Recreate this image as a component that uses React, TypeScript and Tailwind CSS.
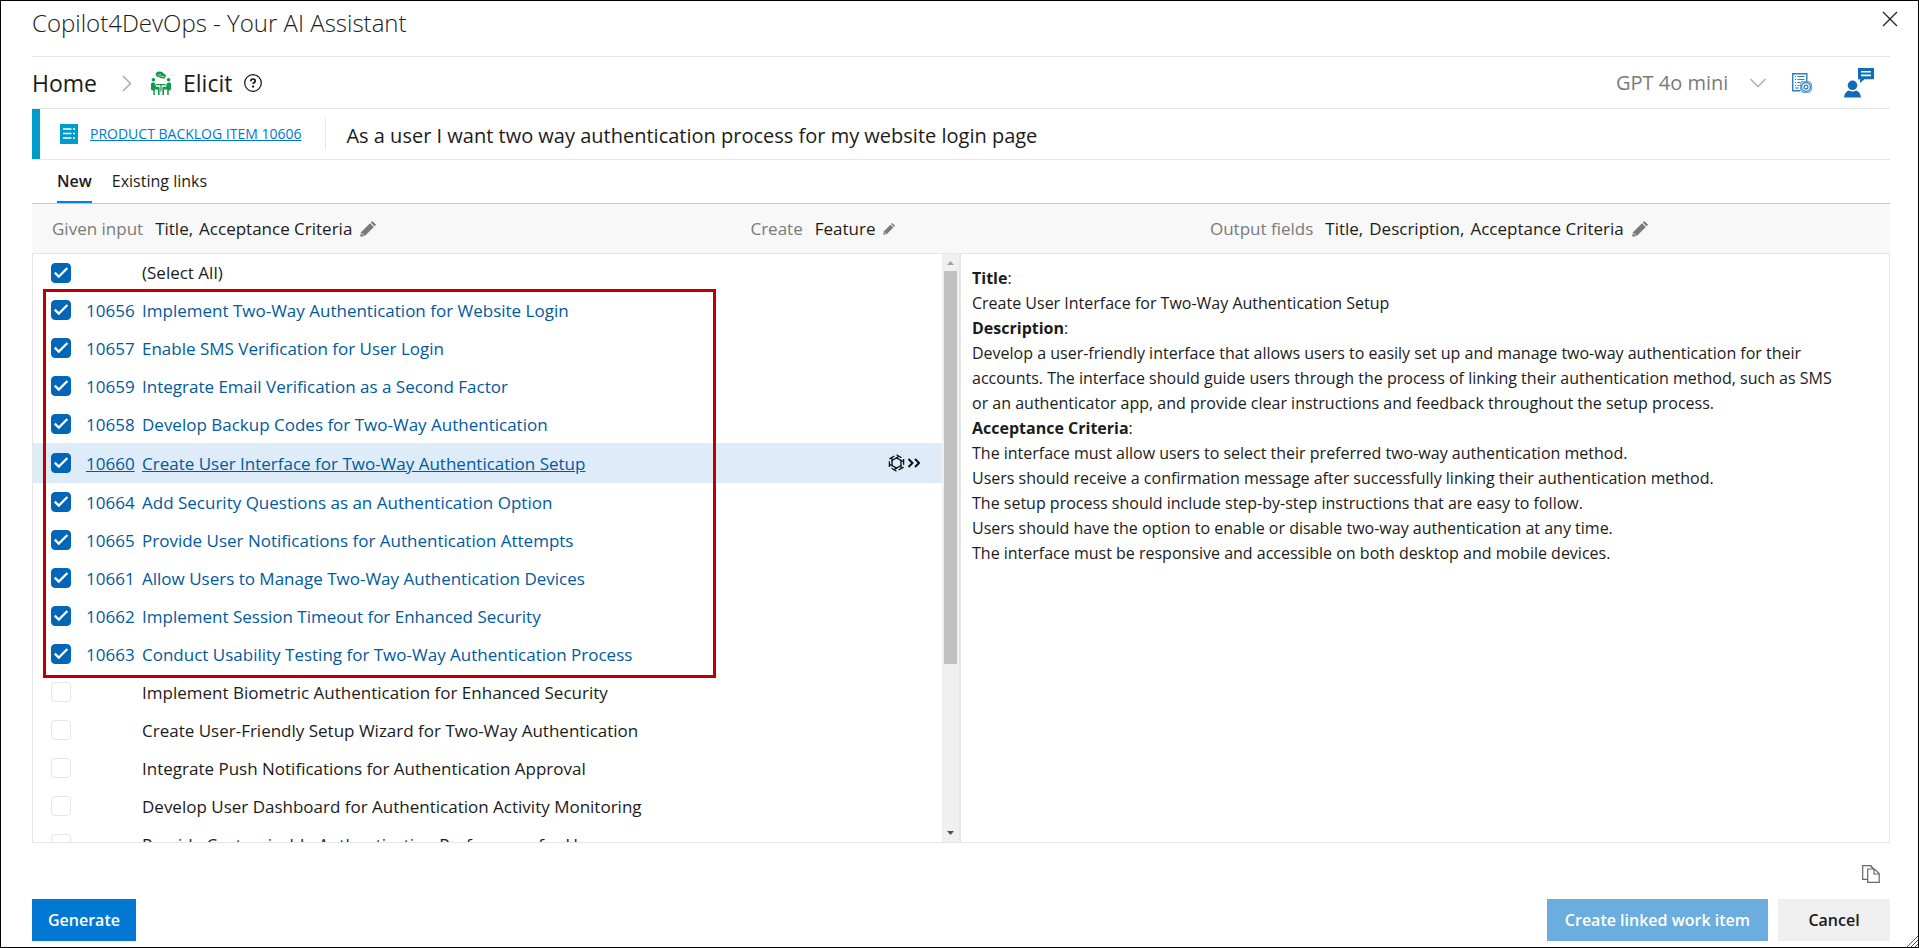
import React, { useState } from 'react';

type WorkItem = {
  id?: string;
  title: string;
};

const ITEMS: WorkItem[] = [
  { id: '10656', title: 'Implement Two-Way Authentication for Website Login' },
  { id: '10657', title: 'Enable SMS Verification for User Login' },
  { id: '10659', title: 'Integrate Email Verification as a Second Factor' },
  { id: '10658', title: 'Develop Backup Codes for Two-Way Authentication' },
  { id: '10660', title: 'Create User Interface for Two-Way Authentication Setup' },
  { id: '10664', title: 'Add Security Questions as an Authentication Option' },
  { id: '10665', title: 'Provide User Notifications for Authentication Attempts' },
  { id: '10661', title: 'Allow Users to Manage Two-Way Authentication Devices' },
  { id: '10662', title: 'Implement Session Timeout for Enhanced Security' },
  { id: '10663', title: 'Conduct Usability Testing for Two-Way Authentication Process' },
  { title: 'Implement Biometric Authentication for Enhanced Security' },
  { title: 'Create User-Friendly Setup Wizard for Two-Way Authentication' },
  { title: 'Integrate Push Notifications for Authentication Approval' },
  { title: 'Develop User Dashboard for Authentication Activity Monitoring' },
  { title: 'Provide Customizable Authentication Preferences for Users' },
];

const CRITERIA = [
  'The interface must allow users to select their preferred two-way authentication method.',
  'Users should receive a confirmation message after successfully linking their authentication method.',
  'The setup process should include step-by-step instructions that are easy to follow.',
  'Users should have the option to enable or disable two-way authentication at any time.',
  'The interface must be responsive and accessible on both desktop and mobile devices.',
];

const Checkbox: React.FC<{ label: string; checked: boolean; onChange: () => void }> = ({ label, checked, onChange }) => (
  <span className="grid h-5 w-5 shrink-0">
    <input
      type="checkbox"
      aria-label={label}
      checked={checked}
      onChange={onChange}
      className="col-start-1 row-start-1 h-5 w-5 appearance-none rounded border border-[#e6e6e6] bg-white checked:border-[#0067b8] checked:bg-[#0067b8]"
    />
    {checked && (
      <svg className="pointer-events-none col-start-1 row-start-1 h-5 w-5" viewBox="0 0 20 20" fill="none" stroke="#fff" strokeWidth="2.2">
        <path d="M3.8 9.6l4 4L16.4 5" />
      </svg>
    )}
  </span>
);

const PencilIcon: React.FC<{ className?: string }> = ({ className = 'h-4 w-4' }) => (
  <svg className={className} viewBox="0 0 16 16" fill="#7a7a7a">
    <path d="M1 11.2L10 2.2l3.8 3.8-9 9L.2 15.8z" />
    <path d="M10.8 1.4L12.2 0 16 3.8l-1.4 1.4z" />
    <path d="M1 11.6l3.4 3.4" stroke="#f8f8f8" strokeWidth="0.8" />
  </svg>
);

const ElicitIcon = () => (
  <svg className="h-6 w-5" viewBox="0 0 20 24" fill="#109b48">
    <ellipse cx="8.6" cy="3.2" rx="3.8" ry="2.8" />
    <ellipse cx="11.2" cy="4.8" rx="3.6" ry="2.4" />
    <path d="M13 6l1 2-3-1z" />
    <path d="M6.8 3.6q1.6 1.4 3.2-.2M9.6 5.4h3.4" fill="none" stroke="#fff" strokeWidth="0.7" />
    <circle cx="2.4" cy="8.8" r="1.8" />
    <circle cx="17.6" cy="8.8" r="1.8" />
    <path d="M0 13q0-1.600 1.400-1.600h1.200q1.200 0 1.600 1.400l.8 3h2.400q1.200 0 1.200 1.200V24H7v-5.600H3.800V24H2.300v-4.600H1.400Q0 19.400 0 18z" />
    <path d="M20 13q0-1.600-1.400-1.600h-1.200q-1.200 0-1.600 1.400l-.8 3h-2.400q-1.200 0-1.200 1.200V24H13v-5.600h3.200V24h1.500v-4.600h.9q1.400 0 1.400-1.400z" />
    <path d="M5.200 13h9.600v1.300H5.200zM9.400 14h1.200v6.500H9.400z" />
  </svg>
);

const LogIcon = () => (
  <svg className="h-5 w-5" viewBox="0 0 20 20" fill="none" stroke="#2d7fc7">
    <path d="M14.800 8V.7H.7v17H8" strokeWidth="1.4" />
    <path d="M5.500 3.500h7M5.500 6.500h7M5.500 9.500h3M5.500 12.500h2M3 3.500h1M3 6.500h1M3 9.500h1M3 12.500h1M3 15h4" strokeWidth="1.2" />
    <path d="M9.500 8.500h8l2 2v7l-2 2h-7l-2-2v-7z" fill="#b9d7f0" stroke="#6aa7da" strokeWidth="1" />
    <circle cx="14" cy="14" r="4.4" fill="#fff" strokeWidth="1.2" />
    <circle cx="14" cy="14" r="1.9" strokeWidth="1.3" />
  </svg>
);

const FeedbackIcon = () => (
  <svg className="h-[30px] w-[30px]" viewBox="0 0 30 30" fill="#0f6cbd">
    <path d="M14 0h16v11.200H20.500L16 15v-3.800h-2z" />
    <path d="M17 3.800h10M17 7.400h10" stroke="#fff" strokeWidth="1.6" />
    <circle cx="8.5" cy="17.3" r="4.8" />
    <path d="M0 29.500q.5-5.500 4.800-7 3.700 2.200 7.400 0 4.300 1.500 4.800 7z" />
  </svg>
);

const BacklogIcon = () => (
  <svg className="h-5 w-[18px]" viewBox="0 0 18 20">
    <path d="M0 0h18v20H0z" fill="#009ccc" />
    <path d="M3 5h8.500M3 9.500h8.500M3 14h8.500M13 5h2M13 9.500h2M13 14h2" stroke="#fff" strokeWidth="1.5" />
  </svg>
);

// two strokes repeated around the hexagon give the swirl
const SwirlIcon = () => (
  <svg className="h-[18px] w-8" viewBox="0 0 32 18" fill="none" stroke="#111">
    {[0, 60, 120, 180, 240, 300].map((angle) => (
      <path key={angle} d="M8.500.8l5 2.900M8 3.600l7.400 4.200" strokeWidth="1.3" transform={`rotate(${angle} 8.5 9)`} />
    ))}
    <path d="M20.500 5l4 4-4 4M27 5l4 4-4 4" strokeWidth="2" />
  </svg>
);

const CopyIcon = () => (
  <svg className="h-[18px] w-[18px]" viewBox="0 0 18 18" fill="none" stroke="#666" strokeWidth="1.2">
    <path d="M5.500 14.400H.7V.7h7.800l2.800 3" />
    <path d="M5.700 4h6.800l4.700 4.500v8.800H5.700z" fill="#fff" />
    <path d="M12 4v5h5M8.500.7l3 3.300" />
  </svg>
);

const FieldGroup: React.FC<{ label: string; values: string[]; small?: boolean }> = ({ label, values, small }) => (
  <>
    <span className="text-[#7a7a7a]">{label}</span>
    <span className="ml-3 flex gap-1.5">
      {values.map((value, i) => (
        <span key={value}>{i < values.length - 1 ? `${value},` : value}</span>
      ))}
    </span>
    <button type="button" aria-label={`Edit ${label}`} className="ml-2">
      <PencilIcon className={small ? 'h-3 w-3' : 'h-4 w-4'} />
    </button>
  </>
);

export default function App() {
  const [checked, setChecked] = useState<boolean[]>(ITEMS.map((item) => Boolean(item.id)));
  const [allChecked, setAllChecked] = useState(true);
  const [active, setActive] = useState('10660');

  const toggle = (index: number) => {
    setChecked(checked.map((value, i) => (i === index ? !value : value)));
  };

  const toggleAll = () => {
    setAllChecked(!allChecked);
    setChecked(ITEMS.map(() => !allChecked));
  };

  return (
    <div className="relative flex h-screen flex-col border border-black bg-white pr-7 pl-[31px] font-['Open_Sans','Noto_Sans',sans-serif] text-[17px] leading-[25px] text-[#1b1b1b]">
      {/* Title bar */}
      <header className="flex h-14 shrink-0 items-start justify-between border-b border-[#e6e6e6]">
        <h1 className="pt-2 text-2xl leading-7 font-light">Copilot4DevOps - Your AI Assistant</h1>
        <button type="button" aria-label="Close" className="-mr-2 pt-2.5">
          <svg className="h-4 w-4" viewBox="0 0 16 16" stroke="#222" strokeWidth="1.3">
            <path d="M1 1l14 14M15 1L1 15" />
          </svg>
        </button>
      </header>

      {/* Breadcrumb */}
      <div className="flex h-13 shrink-0 items-center border-b border-[#e6e6e6] text-[23px] leading-8">
        <a href="#home">Home</a>
        <svg className="mr-[18px] ml-5 h-4 w-4" viewBox="0 0 16 16" fill="none" stroke="#a6abb8" strokeWidth="1.5">
          <path d="M6 1l7.500 7.500L6 16" />
        </svg>
        <ElicitIcon />
        <span className="ml-3">Elicit</span>
        <button type="button" aria-label="Help" className="ml-3">
          <svg className="h-[18px] w-[18px]" viewBox="0 0 18 18">
            <circle cx="9" cy="9" r="8.3" fill="none" stroke="#111" strokeWidth="1.2" />
            <path d="M6.800 7.200q0-2.200 2.200-2.200t2.200 1.900q0 1.100-1.200 1.800-.9.500-.9 1.400" fill="none" stroke="#111" strokeWidth="1.7" />
            <circle cx="9.1" cy="12.6" r="1.1" />
          </svg>
        </button>

        <div className="ml-auto flex items-center">
          <div className="grid items-center">
            <select aria-label="Model" className="col-start-1 row-start-1 w-[150px] appearance-none bg-transparent text-xl text-[#7a7a7a]">
              <option>GPT 4o mini</option>
            </select>
            <svg className="pointer-events-none col-start-1 row-start-1 h-4 w-4 justify-self-end" viewBox="0 0 16 16" fill="none" stroke="#a6abb8" strokeWidth="1.3">
              <path d="M.5 4L8 11.500 15.500 4" />
            </svg>
          </div>
          <button type="button" aria-label="Logs" className="ml-[26px]">
            <LogIcon />
          </button>
          <button type="button" aria-label="Feedback" className="mr-4 ml-8">
            <FeedbackIcon />
          </button>
        </div>
      </div>

      {/* Source work item */}
      <div className="flex h-[51px] shrink-0 items-center border-b border-[#e6e6e6]">
        <div className="w-2 self-stretch bg-[#009ccc]" />
        <div className="ml-5">
          <BacklogIcon />
        </div>
        <a href="#10606" className="ml-3 text-sm text-[#0078d4] underline">
          PRODUCT BACKLOG ITEM 10606
        </a>
        <div className="mr-5 ml-6 h-8 w-px bg-[#e6e6e6]" />
        <span className="pt-1 text-xl">As a user I want two way authentication process for my website login page</span>
      </div>

      {/* Tabs */}
      <nav role="tablist" className="flex h-11 shrink-0 gap-5 border-b border-[#c8c8c8] pl-[25px] text-base">
        <button type="button" role="tab" aria-selected="true" className="border-b-2 border-[#007bff] font-semibold">
          New
        </button>
        <button type="button" role="tab" aria-selected="false" className="border-b-2 border-transparent">
          Existing links
        </button>
      </nav>

      {/* Generation settings */}
      <div className="flex h-[50px] shrink-0 items-center border-b border-[#e6e6e6] bg-[#f8f8f8] pl-5">
        <div className="flex w-[38%] items-center">
          <FieldGroup label="Given input" values={['Title', 'Acceptance Criteria']} />
        </div>
        <div className="flex w-1/4 items-center">
          <FieldGroup label="Create" values={['Feature']} small />
        </div>
        <div className="flex items-center">
          <FieldGroup label="Output fields" values={['Title', 'Description', 'Acceptance Criteria']} />
        </div>
      </div>

      <main className="flex min-h-0 flex-1 border-x border-b border-[#e6e6e6]">
        <div className="flex w-1/2 border-r-2 border-[#e6e6e6]">
          <div className="relative min-w-0 flex-1 overflow-hidden">
            <label className="flex h-[37px] items-center pl-[18px]">
              <Checkbox label="Select all" checked={allChecked} onChange={toggleAll} />
              <span className="ml-[71px]">(Select All)</span>
            </label>
            <ul>
              {ITEMS.map((item, i) => {
                const isActive = item.id === active;
                return (
                  <li
                    key={item.title}
                    className={`flex items-center pl-[18px] ${isActive ? 'h-10 bg-[#deecf9]' : 'h-[38px]'}`}
                  >
                    <Checkbox label={item.title} checked={checked[i]} onChange={() => toggle(i)} />
                    {item.id ? (
                      <a
                        href={`#${item.id}`}
                        onClick={() => setActive(item.id as string)}
                        className={`ml-[15px] flex text-[#005a9e] ${isActive ? 'underline' : ''}`}
                      >
                        <span className="w-14">{item.id}</span>
                        <span>{item.title}</span>
                      </a>
                    ) : (
                      <span className="ml-[71px]">{item.title}</span>
                    )}
                    {isActive && (
                      <button type="button" aria-label="Refine" className="mr-[22px] ml-auto">
                        <SwirlIcon />
                      </button>
                    )}
                  </li>
                );
              })}
            </ul>
            {/* Highlight around the created items */}
            <div className="pointer-events-none absolute top-[35px] left-2.5 h-[389px] w-[673px] border-3 border-[#c00000]" />
          </div>

          {/* Scrollbar */}
          <div className="flex w-[17px] shrink-0 flex-col items-center bg-[#f0f0f0]">
            <svg className="h-[17px] w-[17px] shrink-0" viewBox="0 0 17 17" fill="#a3a3a3">
              <path d="M5 11h7L8.500 7z" />
            </svg>
            <div className="min-h-0 w-full flex-1">
              <div className="mx-auto h-[71%] w-[13px] bg-[#c1c1c1]" />
            </div>
            <svg className="h-[17px] w-[17px] shrink-0" viewBox="0 0 17 17" fill="#505050">
              <path d="M5 6h7l-3.500 4z" />
            </svg>
          </div>
        </div>

        <article className="w-1/2 overflow-hidden pt-3 pr-11 pl-[11px] text-base leading-[25px]">
          <p>
            <strong>Title</strong>:
          </p>
          <p>Create User Interface for Two-Way Authentication Setup</p>
          <p>
            <strong>Description</strong>:
          </p>
          <p>
            Develop a user-friendly interface that allows users to easily set up and manage two-way authentication for their
            accounts. The interface should guide users through the process of linking their authentication method, such as SMS
            or an authenticator app, and provide clear instructions and feedback throughout the setup process.
          </p>
          <p>
            <strong>Acceptance Criteria</strong>:
          </p>
          {CRITERIA.map((line) => (
            <p key={line}>{line}</p>
          ))}
        </article>
      </main>

      {/* Footer */}
      <footer className="shrink-0 pb-1.5">
        <div className="flex h-14 items-center justify-end pt-1.5 pr-2.5">
          <button type="button" aria-label="Copy">
            <CopyIcon />
          </button>
        </div>
        <div className="flex h-[42px] gap-2.5 text-base font-semibold">
          <button type="button" className="bg-[#0078d4] px-4 text-white">
            Generate
          </button>
          <button type="button" className="ml-auto bg-[#6caddf] px-[18px] text-white">
            Create linked work item
          </button>
          <button type="button" className="w-28 bg-[#f0f0f0]">
            Cancel
          </button>
        </div>
      </footer>

      {/* Resize grip */}
      <svg className="pointer-events-none absolute right-0 bottom-0 h-3 w-3" viewBox="0 0 12 12" stroke="#555" strokeWidth="1">
        <path d="M1 12L12 1M5 12l7-7M9 12l3-3" />
      </svg>
    </div>
  );
}
